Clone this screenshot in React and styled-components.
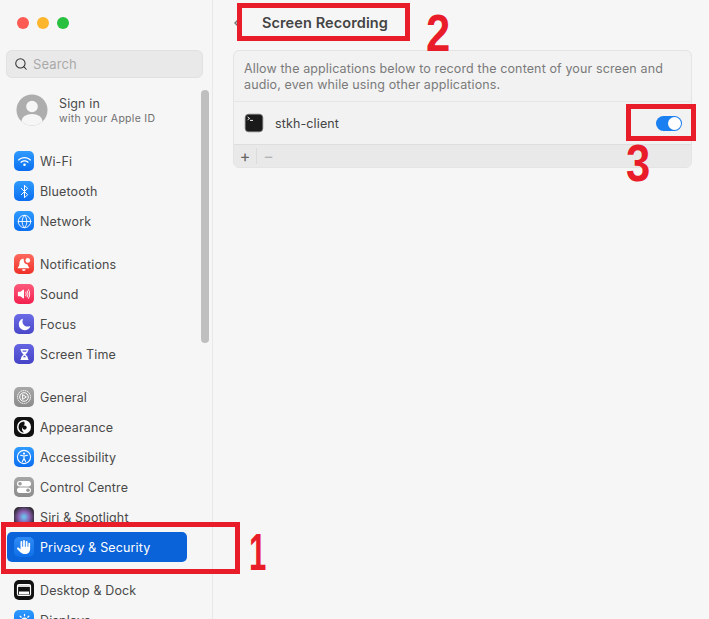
import React from 'react'
import styled, { createGlobalStyle } from 'styled-components'
import { Search as SearchIcon, Bluetooth, Globe } from 'lucide-react'
import { FaWifi, FaHand, FaHourglassHalf } from 'react-icons/fa6'
import { IoVolumeHigh, IoMoon, IoSunny } from 'react-icons/io5'

const GlobalStyle = createGlobalStyle`
  html, body {
    margin: 0;
    padding: 0;
    background: #f6f6f6;
  }
  * { box-sizing: border-box; }
`

const Page = styled.div`
  position: relative;
  display: grid;
  grid-template-columns: 213px 1fr;
  width: 709px;
  height: 619px;
  overflow: hidden;
  font-family: Inter, "Liberation Sans", sans-serif;
  font-size: 12.5px;
  letter-spacing: 0.13px;
  color: #4a4a4a;
  background: #f6f6f6;
`

const Sidebar = styled.aside`
  position: relative;
  height: 619px;
  overflow: hidden;
  padding: 17px 0 0 6px;
  border-right: 1px solid #e8e8e8;
`

const Lights = styled.div`
  display: flex;
  gap: 8px;
  padding-left: 11px;
`

const Light = styled.span`
  width: 12px;
  height: 12px;
  border-radius: 50%;
  background: ${(p) => p.$color};
`

const SearchBox = styled.div`
  display: flex;
  align-items: center;
  gap: 5px;
  width: 197px;
  height: 28px;
  margin-top: 21px;
  padding-left: 7px;
  background: #e9e9e9;
  border: 1px solid #e1e1e1;
  border-radius: 6px;
  color: #a9a9a9;
  font-size: 13px;
  svg { color: #333; }
`

const Scrollbar = styled.div`
  position: absolute;
  top: 90px;
  left: 201px;
  width: 8px;
  height: 253px;
  border-radius: 4px;
  background: #bfbfbf;
`

const Account = styled.div`
  display: flex;
  align-items: center;
  gap: 11px;
  height: 32px;
  margin-top: 16px;
  padding-left: 10px;
`

const AccountText = styled.div`
  display: flex;
  flex-direction: column;
  gap: 1px;
  padding-top: 3px;
  line-height: 14px;
`

const AccountSub = styled.span`
  font-size: 10.5px;
  letter-spacing: 0.3px;
  color: #6f6f6f;
`

const Groups = styled.div`
  display: flex;
  flex-direction: column;
  gap: 13px;
  margin-top: 20px;
`

const Group = styled.div`
  display: flex;
  flex-direction: column;
`

const Row = styled.div`
  display: flex;
  align-items: center;
  gap: 6px;
  width: 180px;
  height: 30px;
  margin-left: 1px;
  padding-left: 7px;
  border-radius: 5px;
  background: ${(p) => (p.$active ? '#0a63d8' : 'transparent')};
  color: ${(p) => (p.$active ? '#fff' : '#4a4a4a')};
`

const Tile = styled.span`
  display: flex;
  align-items: center;
  justify-content: center;
  flex: none;
  width: 20px;
  height: 20px;
  border-radius: 5px;
  background: ${(p) => p.$bg};
  color: #fff;
`

const Main = styled.main`
  padding: 0 17px 0 20px;
`

const Header = styled.header`
  display: flex;
  align-items: center;
  gap: 22px;
  height: 45px;
  padding-left: 1px;
  font-size: 14.5px;
  font-weight: 600;
  letter-spacing: 0.1px;
  color: #444;
`

const Card = styled.section`
  margin-top: 5px;
  border: 1px solid #e4e4e4;
  border-radius: 6px;
  background: #f2f2f2;
  overflow: hidden;
`

const Description = styled.p`
  margin: 0;
  height: 51px;
  padding: 10px 10px 0;
  line-height: 16px;
  font-size: 12.5px;
  letter-spacing: 0.12px;
  color: #7a7a7a;
  border-bottom: 1px solid #e6e6e6;
`

const AppRow = styled.div`
  display: flex;
  align-items: center;
  gap: 11px;
  height: 43px;
  padding: 0 9px 0 10px;
  border-bottom: 1px solid #dedede;
`

const AppName = styled.span`
  flex: 1;
  color: #444;
`

const Toggle = styled.span`
  display: flex;
  justify-content: flex-end;
  align-items: center;
  width: 26px;
  height: 15px;
  padding-right: 1px;
  border-radius: 8px;
  background: #1a7ff0;
`

const Knob = styled.span`
  width: 13px;
  height: 13px;
  border-radius: 50%;
  background: #fff;
`

const Footer = styled.div`
  display: flex;
  align-items: center;
  height: 22px;
  background: #e9e9e9;
  color: #666;
  font-size: 16px;
`

const FooterButton = styled.span`
  width: 23px;
  text-align: center;
  line-height: 16px;
  color: ${(p) => (p.$muted ? '#b3b3b3' : '#666')};
  border-right: ${(p) => (p.$muted ? 'none' : '1px solid #dcdcdc')};
`

const Mark = styled.div`
  position: absolute;
  left: ${(p) => p.$x}px;
  top: ${(p) => p.$y}px;
  width: ${(p) => p.$w}px;
  height: ${(p) => p.$h}px;
  border: 5px solid #e91c2a;
`

const Digit = styled.span`
  position: absolute;
  left: ${(p) => p.$x}px;
  top: ${(p) => p.$y}px;
  font-family: "Liberation Sans", sans-serif;
  font-size: 52px;
  line-height: 52px;
  font-weight: 700;
  letter-spacing: 0;
  color: #e91c2a;
  transform: scaleX(${(p) => p.$squeeze || 0.84});
  transform-origin: left center;
`

const Avatar = () => (
  <svg width="32" height="32" viewBox="0 0 32 32">
    <defs>
      <clipPath id="av"><circle cx="16" cy="16" r="15.5" /></clipPath>
    </defs>
    <circle cx="16" cy="16" r="15.5" fill="#adadad" />
    <g clipPath="url(#av)" fill="#f6f6f6">
      <circle cx="16" cy="12.5" r="5.8" />
      <ellipse cx="16" cy="27" rx="10.5" ry="7" />
    </g>
  </svg>
)

const BellGlyph = () => (
  <svg width="16" height="16" viewBox="0 0 16 16" fill="#fff">
    <path d="M7.4 2.4c-2.5.3-3.9 2-3.9 4.4 0 2.4-.5 3.4-1.6 4.6-.3.4-.1.9.4.9h10.4c.5 0 .7-.5.4-.9-.8-.9-1.2-1.7-1.4-3-2.2.2-4-1.6-3.9-3.8 0-.9-.1-1.6-.4-2.2Z" />
    <path d="M6 13.2h3.6a1.8 1.8 0 0 1-3.6 0Z" />
    <circle cx="11.8" cy="4.4" r="2.3" />
  </svg>
)

const GeneralGlyph = () => (
  <svg width="16" height="16" viewBox="0 0 16 16" fill="none" stroke="#fff" strokeWidth="1">
    <circle cx="8" cy="8" r="6.5" strokeDasharray="1.6 .6" />
    <circle cx="8" cy="8" r="4.3" />
    <path d="M6.6 5.6 10.4 8 6.6 10.4Z" />
  </svg>
)

const AppearanceGlyph = () => (
  <svg width="16" height="16" viewBox="0 0 16 16">
    <circle cx="8" cy="8" r="7" fill="#fff" />
    <path d="M8 2.5a5.5 5.5 0 0 0 0 11c-2-1.6-2.6-3.4-1.2-5.2C8 6.6 9.6 4.6 8 2.5Z" fill="#111" />
    <circle cx="8.6" cy="8.6" r="2.1" fill="#111" />
  </svg>
)

const AccessibilityGlyph = () => (
  <svg width="16" height="16" viewBox="0 0 16 16" fill="none" stroke="#fff">
    <circle cx="8" cy="8" r="6.6" strokeWidth="1.1" />
    <circle cx="8" cy="4.6" r="1.1" fill="#fff" stroke="none" />
    <path d="M4.6 6.3 8 7l3.4-.7M8 7v2.4M8 9.4l-1.6 3M8 9.4l1.6 3" strokeWidth="1.1" strokeLinecap="round" />
  </svg>
)

const ControlGlyph = () => (
  <svg width="16" height="16" viewBox="0 0 16 16">
    <rect x="1" y="2" width="14" height="5.4" rx="2.7" fill="#fff" />
    <circle cx="4" cy="4.7" r="1.8" fill="#9a9a9a" />
    <rect x="1" y="8.6" width="14" height="5.4" rx="2.7" fill="#fff" />
    <circle cx="12" cy="11.3" r="1.8" fill="#9a9a9a" />
  </svg>
)

const DockGlyph = () => (
  <svg width="16" height="16" viewBox="0 0 16 16">
    <rect x="1.5" y="2.5" width="13" height="11" rx="1.5" fill="none" stroke="#fff" strokeWidth="1.2" />
    <rect x="1.5" y="3" width="13" height="2" fill="#fff" opacity=".85" />
    <rect x="3" y="9.5" width="10" height="3" fill="#fff" />
  </svg>
)

const TerminalIcon = () => (
  <svg width="20" height="20" viewBox="0 0 20 20">
    <rect x="1.2" y="1.2" width="17.6" height="17.6" rx="3.5" fill="#1a1a1a" stroke="#777" strokeWidth=".8" />
    <path d="M3.6 4 5.6 5.4 3.6 6.8" fill="none" stroke="#f0f0f0" strokeWidth="1" />
    <path d="M6 7.4h3" stroke="#f0f0f0" strokeWidth="1" />
  </svg>
)

const blue = 'linear-gradient(#2f9bff, #0b6ef0)'
const groups = [
  [
    { name: 'Wi-Fi', bg: blue, icon: <FaWifi size={13} /> },
    { name: 'Bluetooth', bg: blue, icon: <Bluetooth size={15} strokeWidth={1.6} /> },
    { name: 'Network', bg: blue, icon: <Globe size={15} strokeWidth={1.4} /> },
  ],
  [
    { name: 'Notifications', bg: 'linear-gradient(#ff6a5e, #ee3028)', icon: <BellGlyph /> },
    { name: 'Sound', bg: 'linear-gradient(#ff5a7c, #f2204e)', icon: <IoVolumeHigh size={14} /> },
    { name: 'Focus', bg: 'linear-gradient(#6b6be6, #4a48c8)', icon: <IoMoon size={13} /> },
    { name: 'Screen Time', bg: 'linear-gradient(#6564e2, #4644c6)', icon: <FaHourglassHalf size={11} /> },
  ],
  [
    { name: 'General', bg: 'linear-gradient(#a8a8a8, #8b8b8b)', icon: <GeneralGlyph /> },
    { name: 'Appearance', bg: '#111', icon: <AppearanceGlyph /> },
    { name: 'Accessibility', bg: blue, icon: <AccessibilityGlyph /> },
    { name: 'Control Centre', bg: 'linear-gradient(#a6a6a6, #8c8c8c)', icon: <ControlGlyph /> },
    { name: 'Siri & Spotlight', bg: 'radial-gradient(circle, #6fb7e8 10%, #8a5fb0 40%, #222 85%)', icon: null },
    { name: 'Privacy & Security', bg: 'linear-gradient(#2f8bf5, #0f6fe8)', icon: <FaHand size={14} />, active: true },
  ],
  [
    { name: 'Desktop & Dock', bg: '#111', icon: <DockGlyph /> },
    { name: 'Displays', bg: blue, icon: <IoSunny size={15} /> },
  ],
]

const App = () => {
  return (
    <Page>
      <GlobalStyle />
      <Sidebar>
        <Lights>
          <Light $color="#fc5a53" />
          <Light $color="#fdb52c" />
          <Light $color="#28c03f" />
        </Lights>
        <SearchBox>
          <SearchIcon size={14} strokeWidth={1.8} />
          Search
        </SearchBox>
        <Account>
          <Avatar />
          <AccountText>
            <span>Sign in</span>
            <AccountSub>with your Apple ID</AccountSub>
          </AccountText>
        </Account>
        <Groups>
          {groups.map((items) => (
            <Group key={items[0].name}>
              {items.map((item) => (
                <Row key={item.name} $active={item.active}>
                  <Tile $bg={item.bg}>{item.icon}</Tile>
                  {item.name}
                </Row>
              ))}
            </Group>
          ))}
        </Groups>
        <Scrollbar />
      </Sidebar>
      <Main>
        <Header>
          <svg width="6" height="10" viewBox="0 0 6 10" fill="none" stroke="#777" strokeWidth="1.5">
            <path d="M5 1 1 5l4 4" />
          </svg>
          Screen Recording
        </Header>
        <Card>
          <Description>
            Allow the applications below to record the content of your screen and audio, even while using other applications.
          </Description>
          <AppRow>
            <TerminalIcon />
            <AppName>stkh-client</AppName>
            <Toggle><Knob /></Toggle>
          </AppRow>
          <Footer>
            <FooterButton>+</FooterButton>
            <FooterButton $muted>−</FooterButton>
          </Footer>
        </Card>
      </Main>
      <Mark $x={1} $y={522} $w={239} $h={52} />
      <Mark $x={237} $y={3} $w={173} $h={38} />
      <Mark $x={626} $y={104} $w={70} $h={37} />
      <Digit $x={249} $y={526} $squeeze={0.6}>1</Digit>
      <Digit $x={426} $y={7}>2</Digit>
      <Digit $x={626} $y={137}>3</Digit>
    </Page>
  )
}

export default App
